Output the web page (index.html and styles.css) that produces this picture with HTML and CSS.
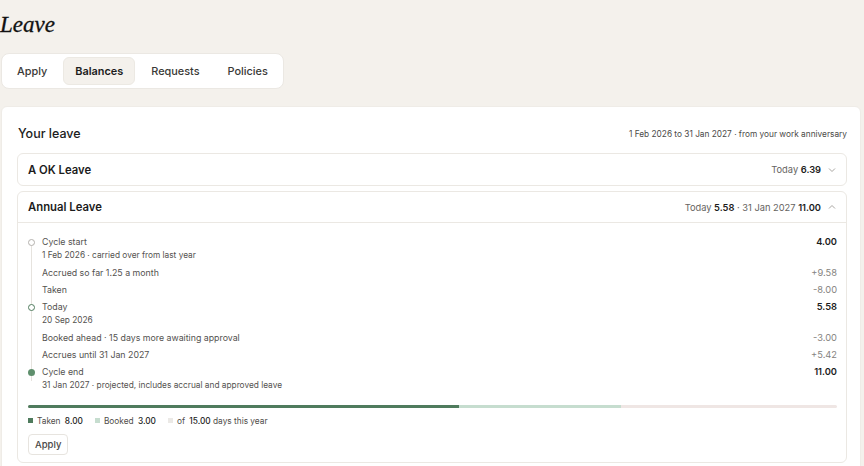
FILE: index.html
```html
<!DOCTYPE html>
<html lang="en">
<head>
  <meta charset="UTF-8" />
  <meta name="viewport" content="width=device-width, initial-scale=1.0" />
  <title>Leave</title>
  <link rel="stylesheet" href="styles.css">
</head>
<body>
  <h1 class="page-title">Leave</h1>

  <nav class="tabs">
    <a href="#">Apply</a>
    <a href="#" class="active">Balances</a>
    <a href="#">Requests</a>
    <a href="#">Policies</a>
  </nav>

  <section class="panel">
    <div class="panel-head">
      <h2>Your leave</h2>
      <span class="period">1 Feb 2026 to 31 Jan 2027 · from your work anniversary</span>
    </div>

    <div class="leave">
      <div class="leave-head">
        <span class="leave-name">A OK Leave</span>
        <span class="leave-sum">Today <b>6.39</b><svg class="chev" viewBox="0 0 10 10"><path d="M2 3.5 5 6.5 8 3.5" /></svg></span>
      </div>
    </div>

    <div class="leave open">
      <div class="leave-head">
        <span class="leave-name">Annual Leave</span>
        <span class="leave-sum">Today <b>5.58</b> · 31 Jan 2027 <b>11.00</b><svg class="chev" viewBox="0 0 10 10"><path d="M2 6.5 5 3.5 8 6.5" /></svg></span>
      </div>

      <div class="leave-body">
        <ul class="timeline">
          <li class="first">
            <span class="dot start"></span>
            <div class="what">Cycle start<small>1 Feb 2026 · carried over from last year</small></div>
            <span class="amt strong">4.00</span>
          </li>
          <li>
            <div class="what">Accrued so far 1.25 a month</div>
            <span class="amt">+9.58</span>
          </li>
          <li>
            <div class="what">Taken</div>
            <span class="amt">-8.00</span>
          </li>
          <li>
            <span class="dot today"></span>
            <div class="what">Today<small>20 Sep 2026</small></div>
            <span class="amt strong">5.58</span>
          </li>
          <li>
            <div class="what">Booked ahead · 15 days more awaiting approval</div>
            <span class="amt">-3.00</span>
          </li>
          <li>
            <div class="what">Accrues until 31 Jan 2027</div>
            <span class="amt">+5.42</span>
          </li>
          <li class="last">
            <span class="dot end"></span>
            <div class="what">Cycle end<small>31 Jan 2027 · projected, includes accrual and approved leave</small></div>
            <span class="amt strong">11.00</span>
          </li>
        </ul>

        <div class="bar">
          <span class="taken" style="width: 53.3%"></span>
          <span class="booked" style="width: 20%"></span>
        </div>

        <div class="legend">
          <span><i class="sq taken"></i>Taken <b>8.00</b></span>
          <span><i class="sq booked"></i>Booked <b>3.00</b></span>
          <span><i class="sq rest"></i>of <b>15.00</b> days this year</span>
        </div>

        <button class="btn">Apply</button>
      </div>
    </div>
  </section>
</body>
</html>
```

FILE: styles.css
```css
:root {
  --bg: #f4f1ec;
  --card: #ffffff;
  --line: #ebe8e3;
  --text: #1c1c1c;
  --muted: #666461;
  --green: #4f7b5d;
  --green-soft: #c6ddcf;
  --rest: #efe6e4;
}
* { box-sizing: border-box; }
body {
  margin: 0;
  padding: 0 3px 0 1px;
  background: var(--bg);
  color: var(--text);
  font-family: Inter, "Noto Sans", sans-serif;
}
.page-title {
  margin: 11px 0 0 -1px;
  font-family: "Liberation Serif", serif;
  font-style: italic;
  font-weight: 400;
  font-size: 23px;
  line-height: 28px;
  color: #111;
  -webkit-text-stroke: 0.3px #111;
}
/* Tabs */
.tabs {
  display: inline-flex;
  margin-top: 14px;
  padding: 3px;
  background: var(--card);
  border: 1px solid var(--line);
  border-radius: 8px;
}
.tabs a {
  padding: 0 11px;
  line-height: 26px;
  font-size: 10.9px;
  font-weight: 500;
  color: #3a3936;
  text-decoration: none;
  border-radius: 6px;
  border: 1px solid transparent;
}
.tabs a + a { margin-left: 4px; }
.tabs a.active {
  background: var(--bg);
  border-color: #ece9e3;
  font-weight: 600;
  color: var(--text);
}
/* Panel */
.panel {
  margin-top: 17px;
  padding: 19px 13px 4px 15px;
  background: var(--card);
  border: 1px solid #efece7;
  border-radius: 6px 6px 0 0;
  min-height: 370px;
}
.panel-head {
  display: flex;
  justify-content: space-between;
  align-items: center;
  margin-bottom: 11px;
}
.panel-head h2 {
  margin: 0 0 0 1px;
  font-size: 12.5px;
  font-weight: 500;
  line-height: 16px;
}
.period { font-size: 8.3px; color: #4b4a47; }
/* Leave cards */
.leave {
  border: 1px solid var(--line);
  border-radius: 6px;
  margin-bottom: 5px;
}
.leave-head {
  display: flex;
  justify-content: space-between;
  align-items: center;
  height: 31px;
  padding: 0 9px 0 10px;
}
.leave.open .leave-head { border-bottom: 1px solid var(--line); }
.leave-name { font-size: 11.3px; font-weight: 600; }
.leave-sum {
  display: flex;
  align-items: center;
  font-size: 9.3px;
  color: var(--muted);
  white-space: pre;
}
.leave-sum b { color: var(--text); font-weight: 600; }
.chev {
  width: 10px;
  height: 10px;
  margin-left: 6px;
  fill: none;
  stroke: #a9a6a2;
  stroke-width: 1;
}
.leave-body { padding: 10px 9px 7px 10px; }
/* Timeline */
.timeline { list-style: none; margin: 0; padding: 0; }
.timeline li {
  position: relative;
  display: flex;
  align-items: flex-start;
  padding: 2px 0 2px 14px;
  background: linear-gradient(#e6e3de, #e6e3de) 3px 0 / 1px 100% no-repeat;
}
.timeline li.first { background-position: 3px 8px; }
.timeline li.last { background-size: 1px 18px; }
.what {
  flex: 1;
  font-size: 8.8px;
  line-height: 13px;
  color: #54524f;
}
.what small {
  display: block;
  font-size: 8.3px;
  line-height: 14px;
  color: #54524f;
}
.amt {
  font-size: 9.3px;
  line-height: 13px;
  color: #858380;
}
.amt.strong { color: var(--text); font-weight: 600; }
.dot {
  position: absolute;
  left: 0;
  top: 6px;
  width: 7px;
  height: 7px;
  border-radius: 50%;
  background: #fff;
}
.dot.start { border: 1px solid #b4b1ad; }
.dot.today { border: 1.5px solid var(--green); }
.dot.end { background: #5f8f6d; }
/* Progress bar */
.bar {
  display: flex;
  height: 3px;
  margin-top: 11px;
  background: var(--rest);
  border-radius: 2px;
  overflow: hidden;
}
.bar .taken { background: var(--green); }
.bar .booked { background: var(--green-soft); }
.legend {
  display: flex;
  gap: 12px;
  margin-top: 8px;
  font-size: 8.3px;
  line-height: 11px;
  color: #4f4d4a;
}
.legend b { color: var(--text); font-weight: 500; margin-left: 2px; }
.sq {
  display: inline-block;
  width: 5px;
  height: 5px;
  margin-right: 4px;
  vertical-align: 1px;
}
.sq.taken { background: var(--green); }
.sq.booked { background: var(--green-soft); }
.sq.rest { background: #ebe9e6; }
.btn {
  margin-top: 7px;
  padding: 0 6px;
  height: 21px;
  font: 500 9.5px Inter, sans-serif;
  color: #4a4846;
  background: #fff;
  border: 1px solid #e7e4df;
  border-radius: 4px;
}
```
